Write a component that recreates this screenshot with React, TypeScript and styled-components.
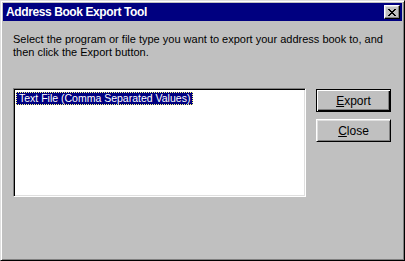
import styled, {createGlobalStyle} from 'styled-components';

const face = '#c0c0c0';
const light = '#dfdfdf';
const shadow = '#808080';
const dark = '#000';
const white = '#fff';
const navy = '#000080';

const GlobalStyle = createGlobalStyle`
  html, body {
    margin: 0;
    padding: 0;
    background: ${face};
  }
  body {
    font-family: "Liberation Sans", Arial, sans-serif;
    font-size: 11px;
  }
`;

export default function App() {
  return (
    <>
      <GlobalStyle/>
      <Window>
        <TitleBar>
          <Title>Address Book Export Tool</Title>
          <CloseBox aria-label="Close">
            <svg width="8" height="7" viewBox="0 0 8 7">
              <path d="M0 0h2v1h1v1h2V1h1V0h2v1H7v1H6v1H5v1h1v1h1v1h1v1H6V6H5V5H3v1H2v1H0V6h1V5h1V4h1V3H2V2H1V1H0z" fill={dark}/>
            </svg>
          </CloseBox>
        </TitleBar>
        <Body>
          <Prompt>
            Select the program or file type you want to export your address book to, and
            <br/>
            then click the Export button.
          </Prompt>
          <Main>
            <ListBox>
              <ListItem selected>Text File (Comma Separated Values)</ListItem>
            </ListBox>
            <Buttons>
              <Button isDefault><u>E</u>xport</Button>
              <Button><u>C</u>lose</Button>
            </Buttons>
          </Main>
        </Body>
      </Window>
    </>
  );
}

const Window = styled.div`
  box-sizing: border-box;
  width: 405px;
  height: 261px;
  padding: 1px;
  background: ${face};
  border: 1px solid;
  border-color: ${light} ${dark} ${dark} ${light};
  box-shadow: inset 1px 1px ${white}, inset -1px -1px ${shadow};
  display: flex;
  flex-direction: column;
`;

const TitleBar = styled.div`
  height: 18px;
  margin: 1px 0 0 1px;
  width: 399px;
  background: ${navy};
  display: flex;
  align-items: center;
  padding: 0 2px 0 3px;
  box-sizing: border-box;
`;

const Title = styled.span`
  flex: 1;
  color: ${white};
  font-weight: bold;
  font-size: 12px;
  letter-spacing: -0.4px;
`;

const CloseBox = styled.button`
  box-sizing: border-box;
  width: 16px;
  height: 14px;
  padding: 0;
  background: ${face};
  border: 1px solid;
  border-color: ${white} ${dark} ${dark} ${white};
  box-shadow: inset -1px -1px ${shadow}, inset 1px 1px ${light};
  display: flex;
  align-items: center;
  justify-content: center;
`;

const Body = styled.div`
  padding: 12px 0 0 11px;
  display: flex;
  flex-direction: column;
`;

const Prompt = styled.p`
  margin: 0;
  font-size: 11px;
  line-height: 13px;
  color: ${dark};
`;

const Main = styled.div`
  display: flex;
  gap: 10px;
  margin-top: 29px;
`;

const ListBox = styled.div`
  box-sizing: border-box;
  width: 293px;
  height: 109px;
  background: ${white};
  border: 1px solid;
  border-color: ${shadow} ${white} ${white} ${shadow};
  box-shadow: inset 1px 1px ${dark}, inset -1px -1px ${light};
  padding: 3px 2px;
`;

const ListItem = styled.div<{selected?: boolean}>`
  display: inline-block;
  box-sizing: border-box;
  height: 13px;
  line-height: 11px;
  padding: 0 2px;
  font-size: 10.5px;
  background: ${({selected}) => selected ? navy : 'transparent'};
  color: ${({selected}) => selected ? white : dark};
  border: 1px dotted ${({selected}) => selected ? '#ffff80' : 'transparent'};
`;

const Buttons = styled.div`
  display: flex;
  flex-direction: column;
  gap: 7px;
  padding-top: 1px;
`;

const Button = styled.button<{isDefault?: boolean}>`
  box-sizing: border-box;
  width: 75px;
  height: 23px;
  padding: 0;
  font-family: "Liberation Sans", Arial, sans-serif;
  font-size: 12px;
  color: ${dark};
  background: ${face};
  border: 1px solid ${dark};
  box-shadow: inset 1px 1px ${white}, inset -1px -1px ${dark}, inset -2px -2px ${shadow};
  ${({isDefault}) => !isDefault && `
    border-color: ${white} ${dark} ${dark} ${white};
    box-shadow: inset 1px 1px ${light}, inset -1px -1px ${shadow};
  `}
`;
